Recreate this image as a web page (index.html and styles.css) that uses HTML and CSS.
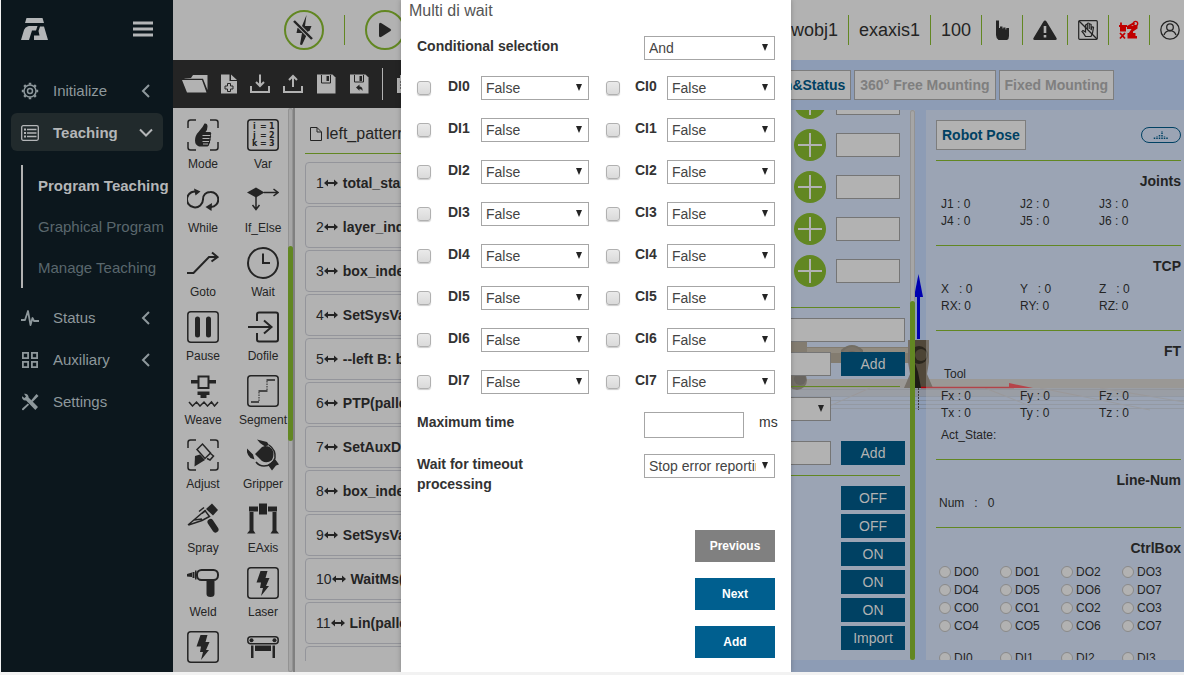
FILE: index.html
```html
<!DOCTYPE html>
<html lang="en">
<head>
<meta charset="utf-8">
<title>Program Teaching</title>
<link rel="stylesheet" href="styles.css">
</head>
<body>
<div class="app">
  <nav class="sidebar">
    <div class="brand">
      <svg width="27" height="22" viewBox="0 0 27 22" fill="#b4b6b8"><path d="M5.500 0h16l1.500 5H4z"/><path d="M6.500 8.500Q7 8 8 8h8.500l-1.500 4.500h-4L8 22H0L3 12q1-3 3.500-3.500z"/><path d="M19 8.500h4L27 22H13v-4.500h5.500L17.500 13z"/></svg>
      <button class="plain" aria-label="Menu"><svg width="20" height="16" viewBox="0 0 20 16" stroke="#b4b6b8" stroke-width="3"><path d="M0 2h20M0 8h20M0 14h20"/></svg></button>
    </div>
    <a class="nav-item" href="#"><svg width="18" height="18" viewBox="0 0 18 18" fill="none" stroke="#8e989c" stroke-width="1.500"><circle cx="9" cy="9" r="6"/><circle cx="9" cy="9" r="2.500"/><path stroke-width="2.500" d="M9 .8v2M9 15.200v2M.8 9h2M15.200 9h2M3.200 3.200l1.400 1.400M13.400 13.400l1.400 1.400M3.200 14.800l1.400-1.400M13.400 4.600l1.400-1.400"/></svg><span>Initialize</span><svg class="chev" width="14" height="14" viewBox="0 0 14 14"><path d="M10 1L4 7l6 6"/></svg></a>
    <a class="nav-item active" href="#"><svg width="18" height="18" viewBox="0 0 18 18" fill="none" stroke="#b4b6b8" stroke-width="1.300"><rect x=".7" y="1.700" width="16.600" height="14.600" rx="1.500"/><path d="M6 5.500h9.500M6 9h9.500M6 12.500h9.500"/><path stroke-width="2" d="M3 5.500h2M3 9h2M3 12.500h2"/></svg><span>Teaching</span><svg class="chev" width="14" height="14" viewBox="0 0 14 14"><path d="M1 3.500l6 6 6-6"/></svg></a>
    <div class="subnav">
      <a class="current" href="#">Program Teaching</a>
      <a href="#">Graphical Program</a>
      <a href="#">Manage Teaching</a>
    </div>
    <a class="nav-item" href="#"><svg width="18" height="18" viewBox="0 0 18 18" fill="none" stroke="#8e989c" stroke-width="1.800" stroke-linejoin="round"><path d="M0 11h4l3-9 2.500 14 2-7 1.500 3h5"/></svg><span>Status</span><svg class="chev" width="14" height="14" viewBox="0 0 14 14"><path d="M10 1L4 7l6 6"/></svg></a>
    <a class="nav-item" href="#"><svg width="18" height="18" viewBox="0 0 18 18" fill="none" stroke="#8e989c" stroke-width="1.800"><path d="M1.900 1.900h5.200v5.200H1.900zM10.900 1.900h5.200v5.200h-5.200zM1.900 10.900h5.200v5.200H1.900zM10.900 10.900h5.200v5.200h-5.200z"/></svg><span>Auxiliary</span><svg class="chev" width="14" height="14" viewBox="0 0 14 14"><path d="M10 1L4 7l6 6"/></svg></a>
    <a class="nav-item" href="#"><svg width="18" height="18" viewBox="0 0 18 18" fill="#8e989c"><path d="M3 .8c2.300-.6 4.800.8 4.600 3.700L17 14l-2.700 3-9.200-9.500C2.500 7.900.6 6 1 3.300L3.500 5 5 3.500z"/><path d="M15.500 1L17.500 3l-6 6L10 7.500zM6.800 10.500l1.300 1.300-5.800 5.400L1 17l.2-1.400z"/></svg><span>Settings</span></a>
  </nav>

  <div class="main">
    <header class="topbar">
      <div class="run">
        <button class="round" aria-label="Disable"><svg width="24" height="30" viewBox="0 0 24 30" fill="#242424"><path d="M14.500 0L13 11h6.500l-2 5-1 0L10 30l-2-.5L10 18H4.500l1-5L10 11z"/><path stroke="#b2b2b2" stroke-width="4" d="M2 6l18 18"/><path stroke="#242424" stroke-width="2.400" d="M2 6l18 18"/></svg></button>
        <span class="bar"></span>
        <button class="round" aria-label="Start"><svg width="14" height="16" viewBox="0 0 14 16" fill="#242424"><path d="M1 2.500Q1 0 3.500 1.200L12.500 7q1.200 1 0 2L3.500 14.800Q1 16 1 13.500z"/></svg></button>
      </div>
      <div class="status">
        <span>wobj1</span>
        <span>exaxis1</span>
        <span>100</span>
        <span><svg width="20" height="22" viewBox="0 0 20 22" fill="#242424"><path d="M4 1.500h3V9h1V7.500h2.500V9.500h.8V8.500h2.200v2h.8V9H17v8q0 3-2 4H6.500Q4 19 4 16z"/></svg></span>
        <span><svg width="24" height="20" viewBox="0 0 24 20"><path fill="#242424" d="M12 0.500q1 0 1.500 1L23.500 18q.8 2-1.200 2H1.700q-2 0-1.200-2L10.500 1.500q.5-1 1.500-1z"/><path stroke="#b2b2b2" stroke-width="2.600" d="M12 6v7M12 15v2.600"/></svg></span>
        <span><svg width="20" height="20" viewBox="0 0 20 20" fill="none" stroke="#242424" stroke-width="1.200"><rect x=".7" y=".7" width="18.600" height="18.600" rx="1"/><path d="M7.500 16.500Q6 13.500 4 11.500l1-1 2.500 1.500V5q1-1 1.800 0v4V3.500q1-1 1.900 0V9 4.500q1-1 1.900 0V10l.7-3q1.200-.5 1.700.3L14.500 13 13 16.500z"/><path d="M1 1l18 18"/></svg></span>
        <span><svg width="20" height="20" viewBox="0 0 20 20" fill="#c00000"><path d="M8.500 13h8v3H18v2.500H8.500zM1 5h6v6.500H1zM8 6l7-4 1 2-4 2h6.500v2.500L14 11.500v2H9.500l3-4.500H8z"/><circle cx="16.500" cy="3.500" r="2.200" fill="none" stroke="#c00000" stroke-width="1.300"/><path fill="none" stroke="#c00000" stroke-width="1.800" d="M1 13l5 5.500M6 13l-5 5.500M2 2.500v3M0 6h8"/></svg></span>
        <span><svg width="20" height="20" viewBox="0 0 20 20" fill="none" stroke="#242424" stroke-width="1.300"><circle cx="10" cy="10" r="9.200"/><circle cx="10" cy="7.200" r="3.300"/><path d="M4 15q1.500-4 6-4.300Q14.500 11 16 15"/></svg></span>
      </div>
    </header>

    <div class="workspace">
      <section class="program">
        <div class="toolbar">
          <button class="plain" aria-label="Open"><svg width="26" height="20" viewBox="0 0 26 20" fill="#b2b2b2"><path d="M2 4.500L9 4l2-3h14.500v15L21 4.800H3zM0 6h20l4.500 12.500H5z"/></svg></button>
          <button class="plain" aria-label="New"><svg width="16" height="20" viewBox="0 0 16 20"><path fill="#b2b2b2" d="M0 .5h8.500V7H16v12.500H0zM10 .5L16 6h-6z"/><path fill="none" stroke="#242424" d="M6.500 9.500h3v2.500H12v3H9.500v2.500h-3V15H4v-3h2.500z"/></svg></button>
          <button class="plain" aria-label="Download"><svg width="20" height="20" viewBox="0 0 20 20" fill="none" stroke="#b2b2b2" stroke-width="2"><path d="M1 12v6h18v-6M10 .5V12M6 8l4 4 4-4"/></svg></button>
          <button class="plain" aria-label="Upload"><svg width="20" height="20" viewBox="0 0 20 20" fill="none" stroke="#b2b2b2" stroke-width="2"><path d="M1 12v6h18v-6M10 13V2M6 6l4-4 4 4"/></svg></button>
          <button class="plain" aria-label="Save"><svg width="20" height="20" viewBox="0 0 20 20"><path fill="#b2b2b2" d="M1 .5h15.500L19.500 3.500v16H1z"/><path fill="none" stroke="#242424" d="M5.500 1v8h9V1"/><path fill="#242424" d="M10.500 2h2.500v5h-2.500z"/></svg></button>
          <button class="plain" aria-label="Save as"><svg width="20" height="20" viewBox="0 0 20 20"><path fill="#b2b2b2" d="M1 .5h15.500L19.500 3.500v16H1z"/><path fill="none" stroke="#242424" d="M5.500 1v7h9V1"/><path fill="#242424" d="M10.500 2h2.500v5h-2.500zM7 13.500l3.500-3v2q3.500 0 3 4.500-.8-2-3-2v1.700z"/></svg></button>
          <span class="split"></span>
          <button class="plain" aria-label="Copy"><svg width="18" height="20" viewBox="0 0 18 20"><path fill="#b2b2b2" d="M1 4h3V1h13v15h-3v3H1z"/><path stroke="#242424" d="M4 8h7M4 11h7M4 14h7"/></svg></button>
        </div>
        <div class="columns">
          <div class="commands">
            <button class="cmd"><svg viewBox="0 0 32 32"><path class="l" d="M1 9V3.500Q1 1 3.500 1H9M23 1h5.500Q31 1 31 3.500V9M31 23v5.500q0 2.500-2.500 2.500H23M9 31H3.500Q1 31 1 28.500V23"/><path d="M17.500 4.500q3-.5 3 3 0 3.500-2 5.500h5q1.500 1.500.2 3.300 1 1.500-.2 3 .7 1.700-.5 3 .5 1.500-.8 2.700.2 1.800-1.700 2.500h-8.500Q8 26 8 21.500q0-5 3.500-8.500l4-5z"/><path stroke="#b2b2b2" d="M15.500 16.500h7.500M15.500 19.500h7M15.500 22.500h6.500M16 25h5"/></svg>Mode</button>
            <button class="cmd"><svg viewBox="0 0 32 32"><rect class="l" x=".8" y=".8" width="30.400" height="30.400" rx="3"/><g class="code"><text x="6" y="10">i</text><text x="13" y="10">=</text><text x="22" y="10">1</text><text x="6" y="19">j</text><text x="13" y="19">=</text><text x="22" y="19">2</text><text x="5" y="27">k</text><text x="13" y="27">=</text><text x="22" y="27">3</text></g></svg>Var</button>
            <button class="cmd"><svg viewBox="0 0 32 32"><path class="l2" d="M11 9a8 8 0 1 0 5 7.500c0-4.500 3-7.500 7.500-7.500a7.500 7.500 0 0 1 .5 15h-2"/><path d="M7 5.500l6.500 3-5 4zM25 20l-6.500 4 6 4z"/></svg>While</button>
            <button class="cmd"><svg viewBox="0 0 32 32"><path d="M0 9.500l9-5 8.500 5-8.500 5z"/><path class="l" d="M17 9.500h14M26.500 6l4.500 3.500-4.500 3.500M9 14v12.500M5.500 22L9 26.500l3.500-4.500"/></svg>If_Else</button>
            <button class="cmd"><svg viewBox="0 0 32 32"><path class="l2" d="M0 26h6.500L22 10h8M25 5.500l5.500 4.500-6 4.500"/></svg>Goto</button>
            <button class="cmd"><svg viewBox="0 0 32 32"><circle class="l2" cx="16" cy="16" r="15"/><path class="l2" d="M16 6.500V16h7"/></svg>Wait</button>
            <button class="cmd"><svg viewBox="0 0 32 32"><rect class="l" x=".8" y=".8" width="30.400" height="30.400" rx="3"/><path stroke="#242424" stroke-width="5" stroke-linecap="round" d="M10.500 8v16M21.500 8v16"/></svg>Pause</button>
            <button class="cmd"><svg viewBox="0 0 32 32"><path class="l2" d="M10 10V3.500Q10 1.500 12 1.500h17q2 0 2 2v25q0 2-2 2H12q-2 0-2-2V22M1 16h23M17 9.500l7.500 6.500-7.500 6.500"/></svg>Dofile</button>
            <button class="cmd"><svg viewBox="0 0 32 32"><rect class="l2" x="11.500" y="1.500" width="10" height="11.500"/><path d="M4 5h7v3.500H4zM22 5h7v3.500h-7zM10.500 16.500h12V20h-3v3h-6v-3h-3z"/><path class="l" d="M2 27l3.500 4L9.500 27l3.500 4 4-4 3.500 4 4-4 3 4L31 27"/></svg>Weave</button>
            <button class="cmd"><svg viewBox="0 0 32 32"><rect class="l" x=".8" y=".8" width="30.400" height="30.400" rx="3"/><path class="l" d="M4 27h8M11.500 16h9M19.500 5H28"/><path stroke="#242424" stroke-dasharray="1.500 1" d="M12 17v9M20 6v9"/></svg>Segment</button>
            <button class="cmd"><svg viewBox="0 0 32 32"><path class="l" d="M1 9V3.500Q1 1 3.500 1H9M23 1h5.500Q31 1 31 3.500V9M31 23v5.500q0 2.500-2.500 2.500H23M9 31H3.500Q1 31 1 28.500V23"/><path class="l" d="M10 10.500l5.500-5.500 8 9-5.500 5.500zM20 19.500l3 1.500 3.500-4-3-2.500"/><path d="M8 17l5-1.500 5 5.500-10.500 6.500z"/></svg>Adjust</button>
            <button class="cmd"><svg viewBox="0 0 32 32"><path d="M0 9.500l6 6 1.500 5-4-1.500Q-1 15 0 9.500zM10 .5L20 3l2 3-4 1.500L13 4zM15 8q6-3 10 2 3 5 0 11-5 4-10 1L8 15z"/><path class="l" d="M22 6q7 5 6 13-3 8-11 8-5 0-8-4"/><path d="M21 26l7-6 4 5.500-3 1-4 5z"/></svg>Gripper</button>
            <button class="cmd"><svg viewBox="0 0 32 32"><path class="l" d="M1 22L18 7.500l4.500 6L15 17.500 1.500 22M7 17l8-1M12 8.500l5-4M15 10.500l4-3"/><path d="M19 6l6-5.500 6 6.500-5 5.500z"/><path stroke="#242424" stroke-width="6" stroke-linecap="round" d="M23.500 19l5 7.500"/></svg>Spray</button>
            <button class="cmd"><svg viewBox="0 0 32 32"><path d="M12 .5h8v11h-8zM2 3.500h9v5H2zM21 3.500h9v5h-9zM2.500 9h4v18.500l2 3H0l2.500-3zM25.500 9h4v18.500l2.500 3h-8.500l2-3z"/></svg>EAxis</button>
            <button class="cmd"><svg viewBox="0 0 32 32"><rect class="l2" x="10" y="3" width="21" height="10" rx="4.500"/><path d="M0 7l5-1.500V10l-5-.5zM5.500 5h2v6h-2zM8 3.500h1.500v9H8zM19.500 14h8v13q0 3-4 3t-4-3z"/></svg>Weld</button>
            <button class="cmd"><svg viewBox="0 0 32 32"><rect class="l" x=".8" y=".8" width="30.400" height="30.400" rx="3"/><path d="M13.500 4h7l-2 7h4l-3.500 8h3L14 29l2-8h-3l1-5.500H9.500z"/></svg>Laser</button>
            <button class="cmd" aria-label="Laser tracking"><svg viewBox="0 0 32 32"><rect class="l" x=".8" y=".8" width="30.400" height="30.400" rx="3"/><path d="M13.500 4h7l-2 7h4l-3.500 8h3L14 29l2-8h-3l1-5.500H9.500z"/></svg></button>
            <button class="cmd" aria-label="Conveyor"><svg viewBox="0 0 32 32"><rect class="l" x=".8" y="5.800" width="30.400" height="7" rx="3"/><circle cx="4.500" cy="9.300" r="2"/><circle cx="27.500" cy="9.300" r="2"/><path d="M8 14.500h16V20H8zM4 14.500h2.500V27H4zM25.500 14.500H28V27h-2.500z"/></svg></button>
            <div class="scroll commands-scroll"><i></i></div>
          </div>
          <div class="listing">
            <h2><svg width="12" height="14" viewBox="0 0 12 14" fill="none" stroke="#242424"><path d="M.5.5H7L11.500 5v8.500H.5zM7 .5V5h4.500"/></svg>left_pattern</h2>
            <ol class="lines">
              <li>1<svg width="14" height="8" viewBox="0 0 14 8"><path d="M0 4l4-3.500V3h6V.5L14 4l-4 3.500V5H4v2.500z"/></svg><b>total_start</b></li>
              <li>2<svg width="14" height="8" viewBox="0 0 14 8"><path d="M0 4l4-3.500V3h6V.5L14 4l-4 3.500V5H4v2.500z"/></svg><b>layer_index</b></li>
              <li>3<svg width="14" height="8" viewBox="0 0 14 8"><path d="M0 4l4-3.500V3h6V.5L14 4l-4 3.500V5H4v2.500z"/></svg><b>box_index</b></li>
              <li>4<svg width="14" height="8" viewBox="0 0 14 8"><path d="M0 4l4-3.500V3h6V.5L14 4l-4 3.500V5H4v2.500z"/></svg><b>SetSysVar</b></li>
              <li>5<svg width="14" height="8" viewBox="0 0 14 8"><path d="M0 4l4-3.500V3h6V.5L14 4l-4 3.500V5H4v2.500z"/></svg><b>--left B: b</b></li>
              <li>6<svg width="14" height="8" viewBox="0 0 14 8"><path d="M0 4l4-3.500V3h6V.5L14 4l-4 3.500V5H4v2.500z"/></svg><b>PTP(pallet</b></li>
              <li>7<svg width="14" height="8" viewBox="0 0 14 8"><path d="M0 4l4-3.500V3h6V.5L14 4l-4 3.500V5H4v2.500z"/></svg><b>SetAuxDO</b></li>
              <li>8<svg width="14" height="8" viewBox="0 0 14 8"><path d="M0 4l4-3.500V3h6V.5L14 4l-4 3.500V5H4v2.500z"/></svg><b>box_index</b></li>
              <li>9<svg width="14" height="8" viewBox="0 0 14 8"><path d="M0 4l4-3.500V3h6V.5L14 4l-4 3.500V5H4v2.500z"/></svg><b>SetSysVar</b></li>
              <li>10<svg width="14" height="8" viewBox="0 0 14 8"><path d="M0 4l4-3.500V3h6V.5L14 4l-4 3.500V5H4v2.500z"/></svg><b>WaitMs(</b></li>
              <li>11<svg width="14" height="8" viewBox="0 0 14 8"><path d="M0 4l4-3.500V3h6V.5L14 4l-4 3.500V5H4v2.500z"/></svg><b>Lin(pallet</b></li>
              <li></li>
            </ol>
          </div>
        </div>
      </section>

      <section class="viewer">
        <svg class="scene" width="394" height="612" viewBox="790 60 394 612">
          <path fill="#8c8883" d="M790 379h394v9H790z"/>
          <path fill="#8b919d" d="M790 388h394v8H790z"/>
          <g stroke="#74797f" fill="none" opacity=".5"><path d="M790 389.500h394M790 396.500h394M790 400.500h394M790 404.500h394M790 408.500h394"/><path stroke="#8b8178" d="M870 388l-45 20M985 388l45 18M1100 388l84 14M1040 388l110 22"/></g>
          <path fill="#665b48" d="M790 342h17v11l-9 2h-8zM807 347h111v16H807z"/>
          <path fill="#7d7362" d="M807 348h111v5H807z"/>
          <path fill="#4c4435" d="M790 353h17l-17 10zM841 350q11-10 22 0v14h-22z"/>
          <circle cx="852" cy="358" r="11" fill="#574d3c"/><circle cx="852" cy="358" r="7" fill="#443c2f"/>
          <circle cx="797" cy="380" r="10" fill="#50483a"/><circle cx="800" cy="379" r="6" fill="#3c362c"/>
          <path fill="#51483a" d="M908 340h21v22l-2 12 6 14h-29l6-14-2-12z"/>
          <path fill="#1e1b15" d="M914 360l4 12 3 16h-10z"/>
          <circle cx="919" cy="355" r="9" fill="#29251c"/><circle cx="921" cy="355" r="6" fill="#4c4435"/>
          <path stroke="#0000b0" stroke-width="3" d="M918.500 290v49"/><path fill="#0000b0" d="M918.500 274l4.500 23h-9z"/>
          <path stroke="#b00008" stroke-width="1.500" d="M921 387.500h93"/><path fill="#b8000a" d="M1009 383l24 5h-24z"/>
          <path stroke="#3c3a38" stroke-dasharray="2 1" d="M918.500 388v22"/>
        </svg>
        <div class="tabs">
          <button class="tab on">Installation&amp;Status</button>
          <button class="tab">360° Free Mounting</button>
          <button class="tab">Fixed Mounting</button>
        </div>
        <div class="panels">
          <div class="panel jog">
            <div class="scrolled">
              <div class="axis"><button class="plus" aria-label="Increase J1"></button><input type="text" aria-label="J1"></div>
              <div class="axis"><button class="plus" aria-label="Increase J2"></button><input type="text" aria-label="J2"></div>
              <div class="axis"><button class="plus" aria-label="Increase J3"></button><input type="text" aria-label="J3"></div>
              <div class="axis"><button class="plus" aria-label="Increase J4"></button><input type="text" aria-label="J4"></div>
              <div class="axis"><button class="plus" aria-label="Increase J5"></button><input type="text" aria-label="J5"></div>
              <hr class="after-axes">
              <div class="field"><input type="text" aria-label="Name"></div>
              <div class="field"><input type="text" aria-label="Point"><button class="act">Add</button></div>
              <hr>
              <div class="field"><span class="select"><select aria-label="Type"><option></option></select></span><span class="blank"></span></div>
              <div class="field spaced"><input type="text" aria-label="Value"><button class="act">Add</button></div>
              <hr>
              <div class="stack"><button class="act">OFF</button><button class="act">OFF</button><button class="act">ON</button><button class="act">ON</button><button class="act">ON</button><button class="act">Import</button></div>
            </div>
            <div class="scroll jog-scroll"><i></i></div>
          </div>
          <div class="panel state">
            <div class="pose"><button class="tab on">Robot Pose</button><button class="pill" aria-label="Charts"><svg width="16" height="8" viewBox="0 0 16 8" stroke="#004163" stroke-width="1.500" stroke-dasharray="1.500 1"><path d="M1.500 8V6M4 8V5M6.500 8V3M9 8V0M11.500 8V5M14 8V6"/></svg></button></div>
            <section><h3>Joints</h3><div class="vals"><span>J1 : 0</span><span>J2 : 0</span><span>J3 : 0</span><span>J4 : 0</span><span>J5 : 0</span><span>J6 : 0</span></div></section>
            <section><h3>TCP</h3><div class="vals"><span>X &nbsp; : 0</span><span>Y &nbsp; : 0</span><span>Z &nbsp; : 0</span><span>RX: 0</span><span>RY: 0</span><span>RZ: 0</span></div></section>
            <section class="ft"><h3>FT</h3><p class="tool">Tool</p><div class="vals"><span>Fx : 0</span><span>Fy : 0</span><span>Fz : 0</span><span>Tx : 0</span><span>Ty : 0</span><span>Tz : 0</span></div><p>Act_State:</p></section>
            <section class="num"><h3>Line-Num</h3><p>Num &nbsp; : &nbsp; 0</p></section>
            <section class="box"><h3>CtrlBox</h3>
              <div class="lamps">
                <label><input type="radio">DO0</label><label><input type="radio">DO1</label><label><input type="radio">DO2</label><label><input type="radio">DO3</label>
                <label><input type="radio">DO4</label><label><input type="radio">DO5</label><label><input type="radio">DO6</label><label><input type="radio">DO7</label>
                <label><input type="radio">CO0</label><label><input type="radio">CO1</label><label><input type="radio">CO2</label><label><input type="radio">CO3</label>
                <label><input type="radio">CO4</label><label><input type="radio">CO5</label><label><input type="radio">CO6</label><label><input type="radio">CO7</label>
              </div>
              <div class="lamps">
                <label><input type="radio">DI0</label><label><input type="radio">DI1</label><label><input type="radio">DI2</label><label><input type="radio">DI3</label>
              </div>
            </section>
          </div>
        </div>
      </section>
    </div>
  </div>

  <div class="dialog" role="dialog" aria-labelledby="dialog-title">
    <h1 id="dialog-title">Multi di wait</h1>
    <form class="form">
      <div class="pair"><label for="cond">Conditional selection</label><span class="select"><select id="cond"><option>And</option><option>Or</option></select></span></div>
      <div class="io"><input type="checkbox" id="d0"><label for="d0">DI0</label><span class="select"><select aria-label="DI0 value"><option>False</option><option>True</option></select></span><input class="second" type="checkbox" id="c0"><label for="c0">CI0</label><span class="select"><select aria-label="CI0 value"><option>False</option><option>True</option></select></span></div>
      <div class="io"><input type="checkbox" id="d1"><label for="d1">DI1</label><span class="select"><select aria-label="DI1 value"><option>False</option><option>True</option></select></span><input class="second" type="checkbox" id="c1"><label for="c1">CI1</label><span class="select"><select aria-label="CI1 value"><option>False</option><option>True</option></select></span></div>
      <div class="io"><input type="checkbox" id="d2"><label for="d2">DI2</label><span class="select"><select aria-label="DI2 value"><option>False</option><option>True</option></select></span><input class="second" type="checkbox" id="c2"><label for="c2">CI2</label><span class="select"><select aria-label="CI2 value"><option>False</option><option>True</option></select></span></div>
      <div class="io"><input type="checkbox" id="d3"><label for="d3">DI3</label><span class="select"><select aria-label="DI3 value"><option>False</option><option>True</option></select></span><input class="second" type="checkbox" id="c3"><label for="c3">CI3</label><span class="select"><select aria-label="CI3 value"><option>False</option><option>True</option></select></span></div>
      <div class="io"><input type="checkbox" id="d4"><label for="d4">DI4</label><span class="select"><select aria-label="DI4 value"><option>False</option><option>True</option></select></span><input class="second" type="checkbox" id="c4"><label for="c4">CI4</label><span class="select"><select aria-label="CI4 value"><option>False</option><option>True</option></select></span></div>
      <div class="io"><input type="checkbox" id="d5"><label for="d5">DI5</label><span class="select"><select aria-label="DI5 value"><option>False</option><option>True</option></select></span><input class="second" type="checkbox" id="c5"><label for="c5">CI5</label><span class="select"><select aria-label="CI5 value"><option>False</option><option>True</option></select></span></div>
      <div class="io"><input type="checkbox" id="d6"><label for="d6">DI6</label><span class="select"><select aria-label="DI6 value"><option>False</option><option>True</option></select></span><input class="second" type="checkbox" id="c6"><label for="c6">CI6</label><span class="select"><select aria-label="CI6 value"><option>False</option><option>True</option></select></span></div>
      <div class="io"><input type="checkbox" id="d7"><label for="d7">DI7</label><span class="select"><select aria-label="DI7 value"><option>False</option><option>True</option></select></span><input class="second" type="checkbox" id="c7"><label for="c7">CI7</label><span class="select"><select aria-label="CI7 value"><option>False</option><option>True</option></select></span></div>
      <div class="pair"><label for="max">Maximum time</label><span class="time"><input type="text" id="max"><span>ms</span></span></div>
      <div class="pair"><label for="timeout">Wait for timeout processing</label><span class="select"><select id="timeout"><option>Stop error reporting</option></select></span></div>
      <div class="actions"><button type="button" class="muted">Previous</button><button type="button">Next</button><button type="button">Add</button></div>
    </form>
  </div>
</div>
</body>
</html>
```
FILE: styles.css
```css
:root {
  --ink: #242424;
  --grey: #b2b2b2;
  --green: #628722;
  --navy: #004163;
  --blue: #8d9cb5;
}
* { box-sizing: border-box; }
body {
  margin: 0;
  background: #f2f2f2;
  color: var(--ink);
  font: 14px/20px "Liberation Sans", Arial, sans-serif;
}
button, input, select { font: inherit; color: inherit; margin: 0; }
button { cursor: pointer; padding: 0; }
h1, h2, h3, p, ol { margin: 0; padding: 0; }
a { text-decoration: none; color: inherit; }
svg { flex: none; display: block; }
.plain { border: 0; background: none; }

.app {
  position: relative;
  display: flex;
  height: calc(100vh - 3px);
  min-height: 480px;
  padding-left: 1px;
  overflow: hidden;
}

/* Sidebar */
.sidebar {
  flex: none;
  width: 172px;
  padding: 18px 10px 0;
  background: #0c171d;
  font-size: 15px;
  color: #8e989c;
}
.brand {
  display: flex;
  justify-content: space-between;
  align-items: center;
  padding: 0 10px;
  margin-bottom: 31px;
}
.nav-item {
  display: flex;
  align-items: center;
  height: 38px;
  padding: 1px 10px 0;
  margin-bottom: 4px;
  border-radius: 6px;
}
.nav-item > span { flex: 1; margin-left: 14px; }
.nav-item.active { background: #212a2c; color: #b4b6b8; font-weight: bold; margin-bottom: 14px; }
.chev { fill: none; stroke: #8e989c; stroke-width: 2; }
.active .chev { stroke: #b4b6b8; }
.subnav {
  margin: 0 -10px 10px 10px;
  border-left: 2px solid var(--grey);
  color: #5a676d;
}
.subnav a { display: block; padding-left: 15px; line-height: 41px; white-space: nowrap; }
.subnav .current { color: #b4b6b8; font-weight: bold; }

/* Top bar */
.main { flex: 1; min-width: 0; display: flex; flex-direction: column; background: var(--grey); }
.topbar {
  flex: none;
  height: 60px;
  display: flex;
  align-items: center;
  justify-content: space-between;
}
.run { display: flex; align-items: center; gap: 20px; padding-left: 111px; }
.round {
  width: 40px;
  height: 40px;
  border: 2px solid var(--green);
  border-radius: 50%;
  background: none;
  display: grid;
  place-items: center;
}
.bar { width: 1px; height: 30px; background: var(--green); }
.status { display: flex; align-items: center; font-size: 18px; padding-right: 4px; }
.status > span { display: flex; align-items: center; height: 30px; padding: 0 10px; }
.status > span + span { border-left: 1px solid var(--green); }
.status > span:last-child { padding-right: 0; }

.workspace {
  flex: 1;
  min-height: 0;
  display: grid;
  grid-template-columns: minmax(0, 1fr) minmax(0, 1fr);
}

/* Program column */
.program { display: flex; flex-direction: column; min-height: 0; }
.toolbar {
  flex: none;
  height: 48px;
  display: flex;
  align-items: center;
  gap: 13px;
  padding-left: 9px;
  background: var(--ink);
}
.split { width: 1px; height: 32px; background: var(--grey); }
.columns { flex: 1; min-height: 0; display: flex; }
.commands {
  position: relative;
  flex: none;
  width: 122px;
  padding-top: 11px;
  display: grid;
  grid-template-columns: 60px 60px;
  align-content: start;
  overflow: hidden;
  border-right: 2px solid #808080;
}
.cmd {
  height: 64px;
  border: 0;
  background: none;
  display: flex;
  flex-direction: column;
  align-items: center;
  gap: 5px;
  font-size: 12px;
  line-height: 16px;
}
.cmd svg { width: 32px; height: 32px; fill: var(--ink); }
.cmd .l, .cmd .l2 { fill: none; stroke: var(--ink); stroke-width: 1.5px; }
.cmd .l2 { stroke-width: 2px; }
.code { font: bold 8px "DejaVu Sans", sans-serif; }
.scroll { background: #a6a6a6; border-radius: 3px; box-shadow: inset 0 0 0 1px #939393; }
.scroll i { display: block; background: var(--green); border-radius: 3px; }
.commands-scroll { position: absolute; top: 0; right: 0; bottom: 0; width: 5px; padding-top: 138px; }
.commands-scroll i { height: 195px; }

.listing { flex: 1; min-width: 0; display: flex; flex-direction: column; padding: 0 10px 11px; }
.listing h2 {
  display: flex;
  align-items: center;
  gap: 4px;
  flex: none;
  height: 46px;
  padding: 6px 0 0 5px;
  margin-bottom: 8px;
  border-bottom: 1px solid var(--green);
  font-size: 16px;
  font-weight: normal;
}
.lines { flex: 1; min-height: 0; overflow: hidden; list-style: none; }
.lines li {
  display: flex;
  align-items: center;
  height: 42px;
  margin-bottom: 2px;
  padding-left: 10px;
  border: 1px solid #94959b;
  border-radius: 4px;
  white-space: nowrap;
}
.lines svg { fill: var(--ink); margin-right: 5px; }

/* Viewer */
.viewer {
  position: relative;
  display: flex;
  flex-direction: column;
  min-height: 0;
  padding: 10px 0 12px;
  background: var(--blue);
}
.scene { position: absolute; top: 0; right: 0; }
.tabs { display: flex; justify-content: flex-end; gap: 3px; padding-right: 70px; margin-bottom: 10px; }
.tab {
  height: 30px;
  padding: 0 5px;
  border: 1px solid #7d7d7d;
  background: var(--grey);
  color: #7f7f7f;
  font-weight: bold;
  white-space: nowrap;
}
.tab.on { color: var(--navy); }
.panels { position: relative; flex: 1; min-height: 0; display: flex; gap: 11px; }
.panel { background: rgba(178, 178, 178, .38); overflow: hidden; }
.jog { flex: 1; min-width: 0; display: flex; }
.scrolled { flex: 1; min-width: 0; margin-top: -23px; padding-right: 5px; }
.jog hr { height: 1px; border: 0; margin: 10px 5px 10px 0; background: var(--green); }
.jog hr.after-axes { margin-top: 20px; }
.axis { display: flex; justify-content: flex-end; align-items: center; gap: 10px; margin-bottom: 10px; padding-right: 5px; }
.jog input, .jog select { height: 24px; border: 1px solid #757575; background: var(--grey); border-radius: 0; }
.axis input { width: 64px; }
.plus {
  width: 32px;
  height: 32px;
  border: 0;
  border-radius: 50%;
  background:
    linear-gradient(var(--grey), var(--grey)) center / 24px 2px no-repeat,
    linear-gradient(var(--grey), var(--grey)) center / 2px 24px no-repeat,
    var(--green);
}
.field { display: flex; gap: 10px; margin-top: 10px; }
.field.spaced { margin-top: 20px; }
.field input, .field .select { flex: 1; min-width: 0; }
.blank { width: 64px; }
.act { width: 64px; height: 24px; border: 0; background: var(--navy); color: var(--grey); }
.stack { display: flex; flex-direction: column; align-items: flex-end; gap: 4px; }
.jog-scroll { width: 5px; display: flex; flex-direction: column; padding-top: 191px; }
.jog-scroll i { flex: 1; }
.axis:nth-child(5) { margin-bottom: 0; }

.state { flex: none; width: 258px; padding: 10px 3px 0 10px; font-size: 12px; line-height: 17px; }
.pose { display: flex; align-items: center; justify-content: space-between; font-size: 14px; padding-bottom: 10px; }
.pill {
  width: 40px;
  height: 16px;
  border: 1px solid var(--navy);
  border-radius: 8px;
  background: none;
  display: grid;
  place-items: center;
}
.state section { border-top: 1px solid var(--green); padding: 10px 0 15px 5px; }
.state h3 { text-align: right; font-size: 14px; line-height: 20px; margin-bottom: 5px; }
.vals { display: grid; grid-template-columns: 79px 79px 79px; }
.ft p { margin-top: 5px; }
.ft .tool { margin: 0 0 5px 3px; }
.state .num { padding-left: 3px; }
.state .box { padding-left: 3px; }
.lamps { display: grid; grid-template-columns: repeat(4, 61px); line-height: 18px; margin-bottom: 14px; }
.lamps label { display: flex; align-items: center; gap: 3px; }
.lamps input {
  appearance: none;
  width: 12px;
  height: 12px;
  border: 1px solid #8a8a8a;
  border-radius: 50%;
  background: var(--grey);
}

/* Drop-downs */
.select { position: relative; display: block; }
.select select {
  appearance: none;
  display: block;
  width: 100%;
  height: 24px;
  padding: 0 18px 0 4px;
  border: 1px solid #a6a6a6;
  border-radius: 0;
  background: #fff;
}
.jog .select select { background: var(--grey); border-color: #757575; }
.select::after {
  content: "";
  position: absolute;
  right: 7px;
  top: 8px;
  border: solid transparent;
  border-width: 7px 3px 0;
  border-top-color: #242424;
  pointer-events: none;
}

/* Dialog */
.dialog {
  position: absolute;
  top: 0;
  bottom: 0;
  left: 401px;
  width: 390px;
  background: #fff;
  color: #333;
  box-shadow: 0 0 5px rgba(0, 0, 0, .25);
  overflow: hidden;
}
.dialog h1 { font-size: 16px; font-weight: normal; line-height: 22px; padding-left: 8px; color: #555; }
.form { padding: 14px 16px 0; }
.form label { font-weight: bold; line-height: 20px; }
.form select { color: #444; }
.pair { display: grid; grid-template-columns: 1fr 131px; min-height: 24px; margin-bottom: 16px; }
.pair label { max-width: 160px; }
.io {
  display: grid;
  grid-template-columns: 31px 33px 108px 17px 29px 32px 108px;
  height: 24px;
  margin-bottom: 18px;
  align-items: start;
}
.io .second { grid-column: 5; }
.io input {
  appearance: none;
  width: 14px;
  height: 14px;
  margin-top: 5px;
  border: 1px solid #b0b0b0;
  border-radius: 3px;
  background: linear-gradient(#eaeaea, #dadada);
  box-shadow: 0 1px 1px rgba(0, 0, 0, .2);
}
.time { display: flex; gap: 15px; }
.time input { width: 100px; height: 26px; border: 1px solid #a6a6a6; border-radius: 0; flex: none; }
.actions { display: flex; flex-direction: column; align-items: flex-end; gap: 16px; margin-top: 36px; }
.actions button {
  width: 80px;
  height: 32px;
  border: 0;
  background: #005f8f;
  color: #fff;
  font-size: 12px;
  font-weight: bold;
}
.actions .muted { background: #808080; }
```
